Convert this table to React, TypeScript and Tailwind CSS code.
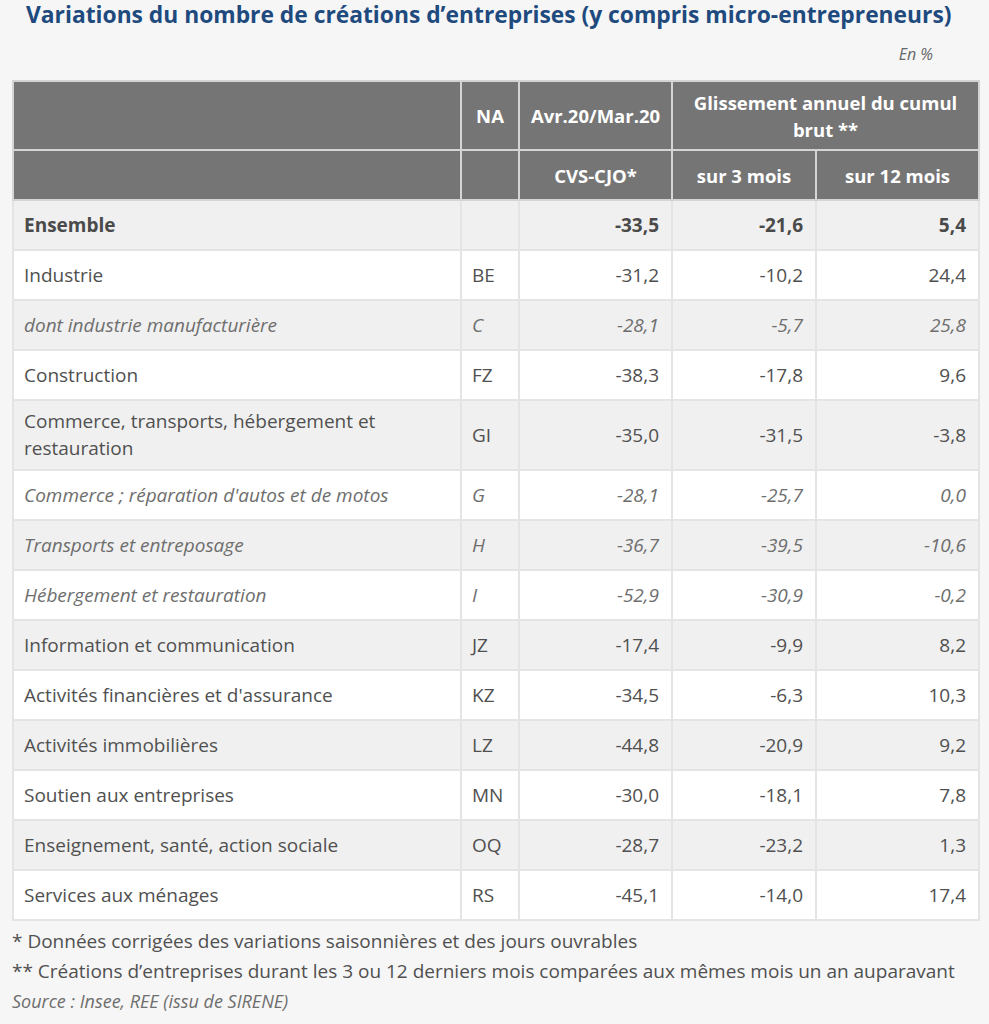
type Row = {
  label: string;
  na: string;
  m: string;
  s3: string;
  s12: string;
  kind?: "bold" | "italic";
};

const rows: Row[] = [
  { label: "Ensemble", na: "", m: "-33,5", s3: "-21,6", s12: "5,4", kind: "bold" },
  { label: "Industrie", na: "BE", m: "-31,2", s3: "-10,2", s12: "24,4" },
  { label: "dont industrie manufacturière", na: "C", m: "-28,1", s3: "-5,7", s12: "25,8", kind: "italic" },
  { label: "Construction", na: "FZ", m: "-38,3", s3: "-17,8", s12: "9,6" },
  { label: "Commerce, transports, hébergement et restauration", na: "GI", m: "-35,0", s3: "-31,5", s12: "-3,8" },
  { label: "Commerce ; réparation d'autos et de motos", na: "G", m: "-28,1", s3: "-25,7", s12: "0,0", kind: "italic" },
  { label: "Transports et entreposage", na: "H", m: "-36,7", s3: "-39,5", s12: "-10,6", kind: "italic" },
  { label: "Hébergement et restauration", na: "I", m: "-52,9", s3: "-30,9", s12: "-0,2", kind: "italic" },
  { label: "Information et communication", na: "JZ", m: "-17,4", s3: "-9,9", s12: "8,2" },
  { label: "Activités financières et d'assurance", na: "KZ", m: "-34,5", s3: "-6,3", s12: "10,3" },
  { label: "Activités immobilières", na: "LZ", m: "-44,8", s3: "-20,9", s12: "9,2" },
  { label: "Soutien aux entreprises", na: "MN", m: "-30,0", s3: "-18,1", s12: "7,8" },
  { label: "Enseignement, santé, action sociale", na: "OQ", m: "-28,7", s3: "-23,2", s12: "1,3" },
  { label: "Services aux ménages", na: "RS", m: "-45,1", s3: "-14,0", s12: "17,4" },
];

export default function App() {
  return (
    <div className="min-h-[1024px] w-[989px] bg-[#f6f6f6] font-['Open_Sans',sans-serif] text-[#505050]">
      <h1 className="pl-[26px] text-[22.8px] leading-[30px] font-bold text-[#1e4a7e]">
        Variations du nombre de créations d’entreprises (y compris micro-entrepreneurs)
      </h1>
      <p className="mt-[12px] pr-[56px] text-right text-[16px] leading-[24px] text-[#666] italic">En %</p>

      <table className="mx-[12px] mt-[14px] w-[966px] table-fixed border-collapse border-2 border-[#e4e4e4] text-[19px] leading-[27px]">
        <colgroup>
          <col className="w-[448px]" />
          <col className="w-[58px]" />
          <col className="w-[153px]" />
          <col className="w-[144px]" />
          <col className="w-[163px]" />
        </colgroup>
        <thead className="bg-[#757575] text-[18.5px] font-bold text-white">
          <tr className="h-[69px]">
            <th className="border-2 border-[#d4d4d4] px-[10px]"></th>
            <th className="border-2 border-[#d4d4d4] px-[10px] text-center">NA</th>
            <th className="border-2 border-[#d4d4d4] px-[8px] text-center">Avr.20/Mar.20</th>
            <th colSpan={2} className="border-2 border-[#d4d4d4] px-[12px] py-[6px] text-center">
              Glissement annuel du cumul brut **
            </th>
          </tr>
          <tr className="h-[50px]">
            <th className="border-2 border-[#d4d4d4]"></th>
            <th className="border-2 border-[#d4d4d4]"></th>
            <th className="border-2 border-[#d4d4d4] text-center">CVS-CJO*</th>
            <th className="border-2 border-[#d4d4d4] text-center">sur 3 mois</th>
            <th className="border-2 border-[#d4d4d4] text-center">sur 12 mois</th>
          </tr>
        </thead>
        <tbody>
          {rows.map((r, i) => {
            const bg = i % 2 === 0 ? "bg-[#f0f0f0]" : "bg-white";
            const style =
              r.kind === "bold"
                ? "font-bold text-[#4a4a4a]"
                : r.kind === "italic"
                  ? "italic text-[#6e6e6e]"
                  : "";
            const cell = "border-2 border-[#e4e4e4] px-[10px] py-[7px]";
            return (
              <tr key={r.label} className={`h-[50px] ${bg} ${style}`}>
                <td className={cell}>{r.label}</td>
                <td className={cell}>{r.na}</td>
                <td className={`${cell} text-right pr-[12px]`}>{r.m}</td>
                <td className={`${cell} text-right pr-[12px]`}>{r.s3}</td>
                <td className={`${cell} text-right pr-[12px]`}>{r.s12}</td>
              </tr>
            );
          })}
        </tbody>
      </table>

      <div className="mt-[5px] px-[12px] text-[19px] leading-[30px]">
        <p>* Données corrigées des variations saisonnières et des jours ouvrables</p>
        <p>** Créations d’entreprises durant les 3 ou 12 derniers mois comparées aux mêmes mois un an auparavant</p>
        <p className="text-[18px] text-[#6e6e6e] italic">Source : Insee, REE (issu de SIRENE)</p>
      </div>
    </div>
  );
}
